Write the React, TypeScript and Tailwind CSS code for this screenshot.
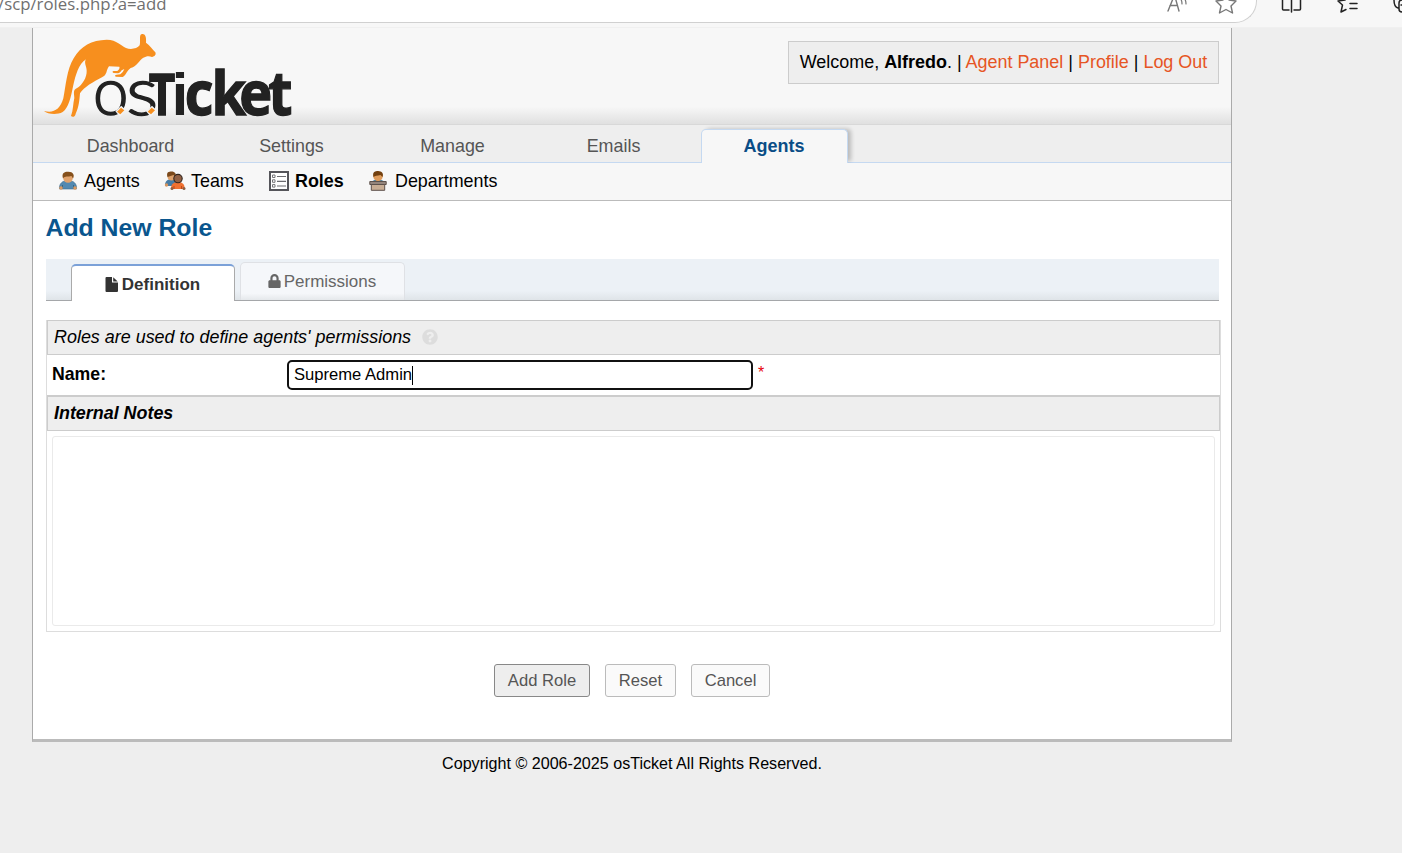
import React from "react";
import { FaLock, FaQuestionCircle } from "react-icons/fa";

function Kangaroo() {
  return (
    <svg className="block" width="260" height="95" viewBox="0 0 780 285" role="img" aria-label="osTicket">
      <path
        fill="#f78f1e"
        d="M12 243 C40 250 60 240 70 205 C78 165 80 120 101 85 C122 48 155 30 200 29 C232 30 242 47 258 54 C272 60 292 56 299 46 C302 34 297 16 304 13 C314 9 320 20 318 38 C330 47 337 58 346 67 C349 74 344 80 336 81 C326 76 318 79 310 83 C298 90 292 108 272 114 C262 120 258 136 248 141 L228 140 C223 138 225 134 230 134 L241 133 C247 128 250 124 253 117 L245 121 C240 128 238 130 234 130 L221 129 C216 127 217 122 222 123 L232 123 C237 119 240 114 238 110 L207 109 C198 120 202 136 186 142 C160 155 132 172 120 190 C118 212 117 230 107 251 C106 260 98 263 93 258 C100 240 99 220 103 204 C102 188 99 180 110 175 C127 165 141 142 140 122 C140 110 131 98 138 88 C116 102 107 135 100 165 C92 205 86 233 68 246 C50 256 22 252 12 243 Z"
      />
      <g fill="#222222">
        <g fontFamily="Lato, sans-serif" fontSize="201" fontWeight="300" stroke="#222222" strokeWidth="4.500">
          <text transform="translate(159 255) scale(0.95 1)">o</text>
          <text transform="translate(259 255) scale(1.12 1)">s</text>
        </g>
        <text x="395" y="256" fontFamily="'Liberation Sans', sans-serif" fontSize="178" fontWeight="700">i</text>
        <g fontFamily="'Open Sans', sans-serif" fontSize="182" fontWeight="700" stroke="#222222" strokeWidth="4">
          <text transform="translate(326 254) scale(0.79 1)" fontSize="174">T</text>
          <text transform="translate(0 255) scale(0.92 1)" x="472 559 650 744" y="0">cket</text>
        </g>
      </g>
      <path fill="#f3f3f3" d="M226 244 L244 227 L258 241 L240 260 Z M318 244 L336 227 L350 241 L332 260 Z" />
      <path fill="#f78f1e" d="M231 245 L243 233 L253 241 L241 253 Z M323 245 L335 233 L345 241 L333 253 Z" />
    </svg>
  );
}

function AgentIcon() {
  return (
    <svg width="20" height="20" viewBox="0 0 20 20">
      <path d="M1.5 18 C1 13 4 9.500 10 9.500 C16 9.500 19 13 18.500 18 Z" fill="#5289b1" stroke="#3c6b8d" strokeWidth=".6" />
      <path d="M4.500 14V18M15.500 14V18" stroke="#376582" />
      <circle cx="3" cy="17" r="1.800" fill="#d99a63" /><circle cx="17" cy="17" r="1.800" fill="#d99a63" />
      <ellipse cx="10" cy="6.500" rx="4.900" ry="5.200" fill="#e1a36d" />
      <path d="M5 7.500C3 1 8 .5 10 .7C15 .5 17 4 15 7.500L13.500 5C10 6 7 4.500 5 7.500Z" fill="#85501c" />
    </svg>
  );
}

function TeamIcon() {
  return (
    <svg className="-ml-px" width="22" height="20" viewBox="0 0 22 20">
      <path d="M1 14C1 10 4 8 8 8C12 8 14 11 14 15H1Z" fill="#467ca5" />
      <circle cx="2.500" cy="14" r="1.700" fill="#d89761" />
      <circle cx="7.500" cy="5.500" r="4" fill="#dda06a" />
      <path d="M3.500 6C2 1 5 .6 7.500 .6C11 .6 12.500 3 11.500 6L9.500 4Z" fill="#7b491b" />
      <path d="M7 18C7 13 9.500 11 14 11C19 11 21 14 20.500 18Z" fill="#ef7131" />
      <path d="M10 15V18M17.500 15V18" stroke="#bd4819" />
      <circle cx="8" cy="17.500" r="1.500" fill="#8d5f43" /><circle cx="20" cy="17.500" r="1.500" fill="#8d5f43" />
      <circle cx="14" cy="7.600" r="4.200" fill="#916043" stroke="#33251e" strokeWidth="1.100" />
    </svg>
  );
}

function RolesIcon() {
  return (
    <svg width="20" height="20" viewBox="0 0 20 20" fill="none">
      <path d="M1 1H19V19H1Z" fill="#fff" stroke="#55555a" strokeWidth="2" />
      <path d="M3.500 4H6V6.500H3.500ZM3.500 8.800H6V11.300H3.500ZM3.500 13.600H6V16.100H3.500Z" stroke="#77777a" />
      <path d="M8 5.500H17M8 10.300H17M8 15H17" stroke="#6c6c70" strokeWidth="1.200" />
    </svg>
  );
}

function DepartmentIcon() {
  return (
    <svg width="18" height="20" viewBox="0 0 18 20">
      <path d="M3 11C3 8 15 8 15 11Z" fill="#4b7f9d" />
      <circle cx="9" cy="5.500" r="4.700" fill="#df9c5c" />
      <path d="M4.500 6C3 .8 6.500 .1 9 .1C13 .1 15 3 13.500 6L11.500 4C8 5 6 4.500 4.500 6Z" fill="#73400f" />
      <path d="M.8 10.500H17.200V13.500H.8Z" fill="#94857c" stroke="#5d514b" />
      <path d="M2.300 13.500H15.700V19.300H2.300Z" fill="#c8ad94" stroke="#5d514b" />
    </svg>
  );
}

const tabs = ["Dashboard", "Settings", "Manage", "Emails", "Agents"];

function BrowserBar() {
  return (
    <div className="relative h-7 w-full overflow-hidden border-b border-[#f0f0f0] bg-[#f7f7f7]">
      <div className="flex h-[23px] w-[1257px] items-start rounded-br-[22px] border-r border-b border-[#d0d0d0] bg-white">
        <div className="-mt-[10px] -ml-[2px] whitespace-nowrap font-['Open_Sans',sans-serif] text-[16.800px] leading-[27px] text-[#707070]">/scp/roles.php?a=add</div>
      </div>
      <svg className="absolute top-0 left-[1160px]" width="242" height="28" viewBox="0 0 242 28" fill="none" strokeWidth="1.400" strokeLinecap="round" strokeLinejoin="round">
        <path d="M8 11L14.500 -5L19 11M10 5.500H17" stroke="#777" />
        <path d="M20 -2Q22 0 22 4M24 -2Q26 0 26 4" stroke="#777" strokeWidth="1.200" />
        <path d="M66 -7L69 0L76 1L71 6L72.500 13L66 9.500L59.500 13L61 6L56 1L63 0Z" stroke="#777" />
        <path d="M131.500 -1V12M129 10H123.500Q122.500 10 122.500 9V-4M134 10H139.500Q140.500 10 140.500 9V-4" stroke="#222" strokeWidth="1.500" />
        <path d="M185 0L178 1L182.500 5L181 12L186 9.500M185 0L187 -3M190 -2H197M190 3.500H197M190 8.500H197" stroke="#222" strokeWidth="1.500" />
        <path d="M234 0Q234 7 238 8M242 0Q239 0 239 3V9Q239 12 242 12M241 5H245" stroke="#222" strokeWidth="1.500" />
      </svg>
    </div>
  );
}

export default function App() {
  return (
    <div className="h-[853px] w-[1402px] overflow-hidden bg-[#eeeeee] font-['Liberation_Sans',Arial,sans-serif] text-[18px] text-black">
      <BrowserBar />
      <main className="ml-8 flex h-[714px] w-[1200px] flex-col border-x border-b-[3px] border-x-[#aaa] border-b-[#bbb] bg-white">
        <header className="flex h-[97px] shrink-0 justify-between border-b border-[#d8d8d8] bg-[linear-gradient(#f7f7f7_0%,#f7f7f7_82%,#e0e0e0_100%)] pt-[2px] pl-[7px]">
          <Kangaroo />
          <div className="mt-[11px] mr-3 flex h-[43px] w-[431px] items-center justify-center whitespace-pre border border-[#ccc] bg-[#eee]">
            <p className="text-[17.950px]">Welcome, <b>Alfredo</b>. | <a className="text-[#e65524]">Agent Panel</a> | <a className="text-[#e65524]">Profile</a> | <a className="text-[#e65524]">Log Out</a></p>
          </div>
        </header>
        <nav className="flex h-[38px] shrink-0 items-end gap-[14px] border-b border-[#c5d9f1] bg-[#eeeeee] pl-6">
          {tabs.map((tab) =>
            tab === "Agents" ? (
              <a key={tab} className="-mb-px flex h-[34px] w-[147px] items-center justify-center rounded-t-[5px] border border-b-0 border-[#c5d9f1] bg-[#f7f7f7] pr-px font-bold text-[#0a4d86] shadow-[4px_-1px_4px_-1px_rgba(0,0,0,0.22)] [clip-path:inset(-8px_-8px_0_-8px)]">{tab}</a>
            ) : (
              <a key={tab} className="flex h-[33px] w-[147px] items-center justify-center pt-[2px] text-[17.900px] text-[#555]">{tab}</a>
            ),
          )}
        </nav>
        <nav className="flex h-[38px] shrink-0 items-center border-b border-[#bbb] bg-[#f7f7f7] pl-[25px] text-[17.900px] [&_svg]:shrink-0">
          <a className="flex w-[107px] items-center gap-[6px]"><AgentIcon />Agents</a>
          <a className="flex w-[104px] items-center gap-[5px]"><TeamIcon />Teams</a>
          <a className="flex w-[100px] items-center gap-[6px] font-bold"><RolesIcon />Roles</a>
          <a className="flex items-center gap-2"><DepartmentIcon />Departments</a>
        </nav>
        <section className="flex flex-col px-[13px]">
          <h2 className="mt-3 -ml-[0.500px] h-[29px] text-[24.800px] leading-[30px] font-bold text-[#0a568e]">Add New Role</h2>
          <div className="mt-[17px] flex h-[42px] w-[1173px] items-end gap-[5px] border-b border-[#a5a7aa] bg-[linear-gradient(#ecf1f6_0%,#ecf1f6_78%,#dfe4e8_100%)] pl-[25px] text-[17px]">
            <a className="-mb-px flex h-[37px] w-[164px] items-center justify-center gap-1 rounded-t-[5px] border-x border-t-2 border-x-[#aaa] border-t-[#7ba1d8] bg-white pt-[2px] pr-px font-bold text-[#333]">
              <svg className="mb-px h-[15px] w-[13px]" viewBox="0 0 13 15" fill="currentColor"><path d="M1.500 0H7V5.500H13V14Q13 15 12 15H1.500Q.5 15 .5 14V1Q.5 0 1.500 0ZM8.200 .2L12.700 4.400H8.200Z" /></svg>
              Definition
            </a>
            <a className="flex h-[38px] w-[165px] items-center justify-center gap-[3px] rounded-t-[5px] border border-b-0 border-[#dfe1e5] bg-[linear-gradient(#f5f7fa_0%,#f5f7fa_82%,#e5e8eb_100%)] pr-px text-[#666]"><FaLock className="mb-px h-[14px] w-[13px]" />Permissions</a>
          </div>
          <form className="mt-[19px] flex h-[312px] w-[1175px] flex-col border border-t-0 border-[#ddd]">
            <div className="flex h-[35px] w-[1173px] shrink-0 items-center border border-[#ccc] bg-[#eee] pl-[6px] text-[17.930px] italic">Roles are used to define agents' permissions<FaQuestionCircle className="mb-[2px] ml-[11px] h-4 w-4 text-[#ddd]" /></div>
            <label className="flex h-10 shrink-0 items-center pl-[5px]">
              <b className="w-[235px] pb-[2px] text-[17.700px]">Name:</b>
              <span className="flex h-[30px] w-[466px] items-center rounded-[5px] border-2 border-[#111] bg-white pl-[5px] text-[16.600px]">Supreme Admin<i className="h-[19px] w-px bg-black" /></span>
              <span className="ml-[5px] pb-1 text-[16px] text-red-600">*</span>
            </label>
            <div className="flex h-9 w-[1173px] shrink-0 items-center border border-t-2 border-[#ccc] bg-[#eee] pl-[6px] text-[17.900px] font-bold italic">Internal Notes</div>
            <div className="mt-[5px] ml-[5px] h-[190px] w-[1163px] rounded-[3px] border border-[#eaeaea] bg-white" />
          </form>
          <div className="mt-8 flex justify-center gap-[15px] pr-[1px] text-[16.600px] text-[#555]">
            <button className="h-[33px] w-[96px] rounded-[3px] border border-[#888] bg-[#eee] pt-[2px] pl-px">Add Role</button>
            <button className="h-[33px] w-[71px] rounded-[3px] border border-[#bbb] bg-[#fafafa] pt-[2px] pl-px">Reset</button>
            <button className="h-[33px] w-[79px] rounded-[3px] border border-[#bbb] bg-[#fafafa] pt-[2px] pl-px">Cancel</button>
          </div>
        </section>
      </main>
      <footer className="mt-[11px] ml-8 w-[1200px] text-center text-[16.100px] leading-5">Copyright © 2006-2025 osTicket All Rights Reserved.</footer>
    </div>
  );
}
